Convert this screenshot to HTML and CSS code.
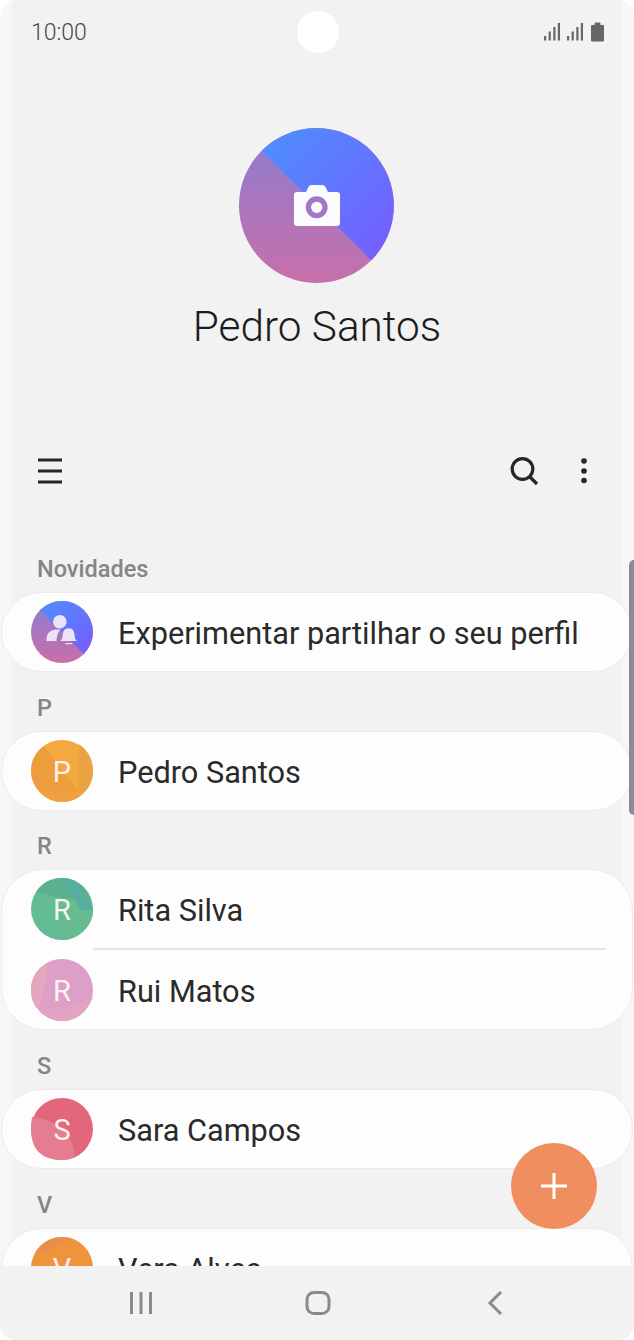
FILE: index.html
```html
<!DOCTYPE html>
<html lang="en">
<head>
    <meta charset="UTF-8">
    <meta name="viewport" content="width=device-width, initial-scale=1.0">
    <title>Contactos</title>
    <link rel="stylesheet" href="styles.css">
</head>
<body>
    <div class="screen">
        <div class="camera-hole"></div>

        <div class="status-bar">
            <span class="time">10:00</span>
            <svg class="status-icons" width="60" height="20" viewBox="0 0 60 20">
                <g fill="#666">
                    <rect x="0" y="14" width="2.200" height="4.500"/>
                    <rect x="4.600" y="9.500" width="2.200" height="9"/>
                    <rect x="9.300" y="5" width="2.200" height="13.500"/>
                    <rect x="13.800" y="1" width="2.200" height="17.500"/>
                    <rect x="23" y="14" width="2.200" height="4.500"/>
                    <rect x="27.600" y="9.500" width="2.200" height="9"/>
                    <rect x="32.300" y="5" width="2.200" height="13.500"/>
                    <rect x="36.800" y="1" width="2.200" height="17.500"/>
                    <path d="M47 4q0-1 1-1h2.500v-1.500q0-1 1-1h4q1 0 1 1v1.500h2.500q1 0 1 1v14.500q0 1-1 1h-11q-1 0-1-1z"/>
                </g>
            </svg>
        </div>

        <div class="profile">
            <svg class="profile-photo" width="155" height="155" viewBox="0 0 155 155">
                <defs>
                    <linearGradient id="purple" x1="0" y1="0" x2="0" y2="1">
                        <stop offset="0" stop-color="#8c7dd3"/>
                        <stop offset="1" stop-color="#c86fa8"/>
                    </linearGradient>
                    <linearGradient id="blue" x1="0" y1="0" x2="1" y2="1">
                        <stop offset="0.1" stop-color="#508bff"/>
                        <stop offset="0.9" stop-color="#7360ff"/>
                    </linearGradient>
                </defs>
                <circle cx="77.500" cy="77.500" r="77.500" fill="url(#purple)"/>
                <path d="M22.700 22.700A77.500 77.500 0 0 1 132.300 132.300z" fill="url(#blue)"/>
                <path d="M58 64h9l2.500-5q1-2 3-2h11q2 0 3 2l2.500 5h9q3 0 3 3v28q0 3-3 3h-40q-3 0-3-3v-28q0-3 3-3z" fill="#fcfcfe"/>
                <circle cx="77.700" cy="79.300" r="8.300" fill="#fcfcfe" stroke="#a278c8" stroke-width="5.300"/>
            </svg>
            <h1>Pedro Santos</h1>
        </div>

        <div class="toolbar">
            <svg width="26" height="26" viewBox="0 0 26 26">
                <path d="M1 2h24M1 13h24M1 24h24" stroke="#262626" stroke-width="3" fill="none"/>
            </svg>
            <div class="toolbar-right">
                <svg width="30" height="30" viewBox="0 0 30 30">
                    <circle cx="13.500" cy="13" r="10.300" stroke="#262626" stroke-width="3.200" fill="none"/>
                    <path d="M21 21l7 7" stroke="#262626" stroke-width="3.200" fill="none"/>
                </svg>
                <svg width="8" height="28" viewBox="0 0 8 28">
                    <circle cx="4" cy="4" r="2.800" fill="#262626"/>
                    <circle cx="4" cy="14" r="2.800" fill="#262626"/>
                    <circle cx="4" cy="23.500" r="2.800" fill="#262626"/>
                </svg>
            </div>
        </div>

        <div class="contacts">
            <h2>Novidades</h2>
            <div class="card">
                <div class="row">
                    <svg class="avatar" width="62" height="62" viewBox="0 0 155 155">
                        <circle cx="77.500" cy="77.500" r="77.500" fill="url(#purple)"/>
                        <path d="M22.700 22.700A77.500 77.500 0 0 1 132.300 132.300z" fill="url(#blue)"/>
                        <g fill="#ebe4f6">
                            <circle cx="72" cy="52" r="17"/>
                            <path d="M38 100q0-26 22-29h14q-10 10-10 29z"/>
                            <path d="M73 100q6-4 6-14 0-17 15-18 15 1 15 18 0 10 6 14z"/>
                            <rect x="86" y="105" width="17" height="3"/>
                        </g>
                    </svg>
                    <span class="row-name">Experimentar partilhar o seu perfil</span>
                </div>
            </div>

            <h2>P</h2>
            <div class="card">
                <div class="row">
                    <div class="avatar">
                        <svg width="62" height="62" viewBox="0 0 62 62">
                            <circle cx="31" cy="31" r="31" fill="#f4a93f"/>
                            <path d="M0 31A31 31 0 0 1 13 6L48 52H10Q0 43 0 31z" fill="#ee9d3c"/>
                            <path d="M48 4Q62 14 62 31 62 47 48 56z" fill="#eaa343"/>
                            <path d="M10 52H48V57Q40 62 31 62 19 62 10 52z" fill="#efa141"/>
                        </svg>
                        <span>P</span>
                    </div>
                    <span class="row-name">Pedro Santos</span>
                </div>
            </div>

            <h2>R</h2>
            <div class="card">
                <div class="row">
                    <div class="avatar">
                        <svg width="62" height="62" viewBox="0 0 62 62">
                            <circle cx="31" cy="31" r="31" fill="#63bc94"/>
                            <path d="M5 14Q14 0 31 0 50 0 60 22L30 20z" fill="#5cb08f"/>
                            <path d="M31 32H62Q62 47 48 56 40 62 31 62z" fill="#67bb8f"/>
                            <path d="M32 0Q52 0 62 32H50z" fill="#57ad9e"/>
                        </svg>
                        <span>R</span>
                    </div>
                    <span class="row-name">Rita Silva</span>
                </div>
                <div class="divider"></div>
                <div class="row">
                    <div class="avatar">
                        <svg width="62" height="62" viewBox="0 0 62 62">
                            <circle cx="31" cy="31" r="31" fill="#dd9ec8"/>
                            <path d="M16 4Q0 13 0 31 0 44 7 50 14 40 16 4z" fill="#e5a7bd"/>
                            <path d="M7 50Q18 62 31 62 52 62 62 38 40 50 7 50z" fill="#e3a3c2"/>
                        </svg>
                        <span>R</span>
                    </div>
                    <span class="row-name">Rui Matos</span>
                </div>
            </div>

            <h2>S</h2>
            <div class="card">
                <div class="row">
                    <div class="avatar">
                        <svg width="62" height="62" viewBox="0 0 62 62">
                            <circle cx="31" cy="31" r="31" fill="#e2677b"/>
                            <path d="M1 19Q30 22 41 45L44 59Q38 62 31 62 0 62 0 31 0 25 1 19z" fill="#e67c8f"/>
                        </svg>
                        <span>S</span>
                    </div>
                    <span class="row-name">Sara Campos</span>
                </div>
            </div>

            <h2>V</h2>
            <div class="card">
                <div class="row">
                    <div class="avatar">
                        <svg width="62" height="62" viewBox="0 0 62 62">
                            <circle cx="31" cy="31" r="31" fill="#f0943c"/>
                            <path d="M6 13Q16 0 31 0 36 0 42 2L4 20z" fill="#e98f48"/>
                        </svg>
                        <span>V</span>
                    </div>
                    <span class="row-name">Vera Alves</span>
                </div>
            </div>
        </div>

        <div class="scrollbar"></div>

        <div class="fab">
            <svg width="28" height="28" viewBox="0 0 28 28">
                <path d="M14 1v26M1 14h26" stroke="#fff" stroke-width="3" fill="none"/>
            </svg>
        </div>

        <div class="nav-bar">
            <svg width="24" height="24" viewBox="0 0 24 24">
                <path d="M2.500 1v22M12 1v22M21.500 1v22" stroke="#8a8a8a" stroke-width="3" fill="none"/>
            </svg>
            <svg width="26" height="24" viewBox="0 0 26 24">
                <rect x="2" y="1.500" width="22" height="21" rx="7" stroke="#8a8a8a" stroke-width="3" fill="none"/>
            </svg>
            <svg width="16" height="26" viewBox="0 0 16 26">
                <path d="M14 2L3 13l11 11" stroke="#8a8a8a" stroke-width="3" fill="none"/>
            </svg>
        </div>
    </div>
</body>
</html>
```

FILE: styles.css
```css
* {
    box-sizing: border-box;
}

body {
    margin: 0;
    background-color: white;
    font-family: Roboto, "Liberation Sans", sans-serif;
}

.screen {
    position: relative;
    width: 634px;
    height: 1340px;
    overflow: hidden;
    border-radius: 16px;
    background: linear-gradient(to right, #f7f7f7 11px, #f2f2f2 13px, #f2f2f2 621px, #f7f7f7 623px);
    display: flex;
    flex-direction: column;
}

.camera-hole {
    position: absolute;
    left: 297px;
    top: 11px;
    width: 42px;
    height: 42px;
    border-radius: 50%;
    background-color: white;
}

.status-bar {
    display: flex;
    justify-content: space-between;
    align-items: center;
    height: 64px;
    padding: 0 30px 0 31px;
    flex-shrink: 0;
}

.time {
    font-size: 23px;
    font-weight: 300;
    color: #4a4a4a;
}

.profile {
    display: flex;
    flex-direction: column;
    align-items: center;
    padding-top: 64px;
    height: 376px;
    flex-shrink: 0;
}

.profile-photo {
    display: block;
    margin-left: -1px;
}

.profile h1 {
    margin: 18px 0 0;
    font-size: 42.300px;
    line-height: 52px;
    font-weight: 300;
    color: #1c1c1c;
}

.toolbar {
    display: flex;
    justify-content: space-between;
    align-items: center;
    height: 62px;
    margin-bottom: 31px;
    padding: 0 46px 0 37px;
    flex-shrink: 0;
}

.toolbar-right {
    display: flex;
    align-items: center;
    gap: 41px;
}

.contacts {
    display: flex;
    flex-direction: column;
    height: 733px;
    overflow: hidden;
    flex-shrink: 0;
}

.contacts h2 {
    margin: 0;
    height: 58.800px;
    padding: 0 0 10px 37px;
    display: flex;
    align-items: flex-end;
    font-size: 23.500px;
    line-height: 26px;
    font-weight: 500;
    color: #858585;
    flex-shrink: 0;
}

.card {
    margin: 0 1px;
    background-color: #fdfdfd;
    border: 1px solid #ebebeb;
    border-radius: 42px;
    flex-shrink: 0;
}

.row {
    display: flex;
    align-items: center;
    gap: 25px;
    height: 78px;
    padding-left: 29px;
}

.divider {
    height: 2px;
    margin: 0 26px 1px 91px;
    background-color: #e4e4e6;
}

.avatar {
    display: grid;
    width: 62px;
    height: 62px;
    flex-shrink: 0;
}

.avatar svg,
.avatar span {
    grid-area: 1 / 1;
}

.avatar span {
    display: flex;
    justify-content: center;
    align-items: center;
    padding-top: 2px;
    color: #fdf3ea;
    font-size: 29px;
}

.row-name {
    padding-top: 3px;
    font-size: 30.700px;
    color: #2a2a2a;
    white-space: nowrap;
}

.scrollbar {
    position: absolute;
    right: 0;
    top: 560px;
    width: 5px;
    height: 255px;
    border-radius: 5px 0 0 5px;
    background-color: #8b8b93;
}

.fab {
    position: absolute;
    left: 511px;
    top: 1143px;
    width: 86px;
    height: 86px;
    border-radius: 50%;
    background-color: #f08e5f;
    display: flex;
    justify-content: center;
    align-items: center;
}

.nav-bar {
    display: grid;
    grid-template-columns: repeat(3, 177px);
    justify-content: center;
    justify-items: center;
    align-items: center;
    height: 74px;
    padding-left: 2px;
    background-color: #f2f2f2;
    flex-shrink: 0;
}
```
